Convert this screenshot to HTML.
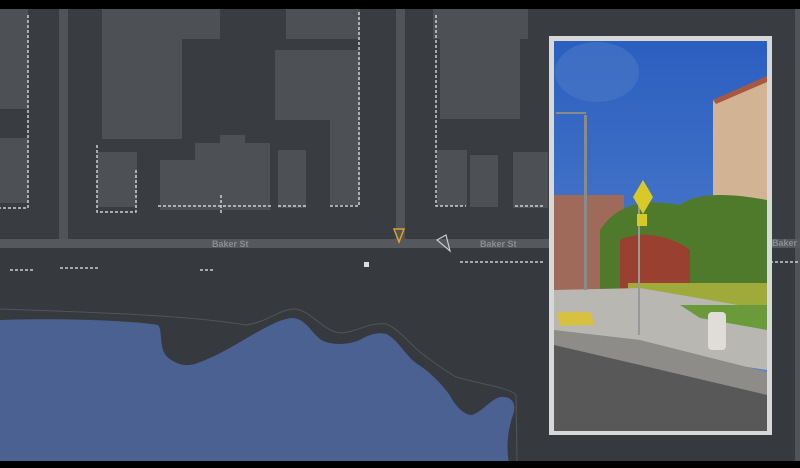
<!DOCTYPE html>
<html><head><style>
html,body{margin:0;padding:0;background:#000;}
svg{display:block;}
</style></head><body>
<svg width="800" height="468" viewBox="0 0 800 468" xmlns="http://www.w3.org/2000/svg">
<rect width="800" height="468" fill="#000"/>
<rect x="0" y="9" width="800" height="452" fill="#363a3e"/>
<rect x="0" y="9" width="800" height="230" fill="#393c40"/>
<rect x="59" y="9" width="9" height="230" fill="#505357"/>
<rect x="396" y="9" width="9" height="230" fill="#505357"/>
<rect x="795" y="9" width="5" height="452" fill="#505357"/>
<g fill="#4d5054">
<rect x="0" y="9" width="28" height="100"/>
<rect x="0" y="138" width="28" height="65"/>
<rect x="102" y="9" width="118" height="30"/>
<rect x="102" y="39" width="80" height="100"/>
<rect x="97" y="152" width="40" height="55"/>
<rect x="160" y="160" width="40" height="50"/>
<rect x="195" y="143" width="25" height="67"/>
<rect x="220" y="135" width="25" height="75"/>
<rect x="245" y="143" width="25" height="67"/>
<rect x="278" y="150" width="28" height="58"/>
<rect x="286" y="9" width="74" height="30"/>
<rect x="275" y="50" width="85" height="70"/>
<rect x="330" y="120" width="30" height="85"/>
<rect x="433" y="9" width="95" height="30"/>
<rect x="440" y="39" width="80" height="80"/>
<rect x="437" y="150" width="30" height="56"/>
<rect x="470" y="155" width="28" height="52"/>
<rect x="513" y="152" width="35" height="56"/>
</g>
<g stroke="#e8e8e8" stroke-width="1.5" stroke-dasharray="3 2" fill="none" opacity="0.85">
<path d="M28,15 V208 H0"/>
<path d="M97,145 V212 H136 V170"/>
<path d="M158,206 H273"/>
<path d="M278,206 H306"/>
<path d="M359,12 V206 H328"/>
<path d="M436,15 V206 H466"/>
<path d="M515,206 H545"/>
<path d="M221,195 V214"/>
<path d="M10,270 H35 M60,268 H100 M200,270 H215 M460,262 H545 M760,262 H800"/>
</g>
<rect x="364" y="262" width="5" height="5" fill="#ddd"/>
<rect x="0" y="239" width="800" height="9" fill="#55585c"/>
<text x="212" y="247" font-family="Liberation Sans,sans-serif" font-size="9" font-weight="bold" fill="#8a8d90">Baker St</text>
<text x="480" y="247" font-family="Liberation Sans,sans-serif" font-size="9" font-weight="bold" fill="#8a8d90">Baker St</text>
<text x="772" y="246" font-family="Liberation Sans,sans-serif" font-size="9" font-weight="bold" fill="#8a8d90">Baker St</text>
<polygon points="394,229 404,229 399,242" fill="none" stroke="#d9a420" stroke-width="1.5"/>
<polygon points="437,240 446,235 450,251" fill="none" stroke="#ccc" stroke-width="1.2"/>
<g transform="scale(1.053,1)">
<path d="M0,309 C80,312 180,315 233,325 C255,322 265,309 280,309 C295,310 305,330 323,333 C340,332 350,322 367,324 C380,330 390,345 400,353 C415,365 425,372 433,377 C460,385 485,388 490,395 L491,461" fill="none" stroke="#50545a" stroke-width="1"/>
<path d="M0,320 C50,318 120,320 150,325 C155,330 150,350 160,358 C170,366 178,366 185,364 C220,352 255,320 277,318 C290,318 295,332 305,340 C315,346 335,345 345,338 C352,334 360,332 367,334 C378,340 385,355 395,363 C410,373 420,385 427,395 C432,405 440,415 448,415 C458,412 465,400 475,397 C485,396 490,402 488,412 C484,425 480,440 483,461 L0,461 Z" fill="#4a6192"/>
</g>
<rect x="549" y="36" width="223" height="399" fill="#d8d8d8"/>
<defs>
<linearGradient id="sky" x1="0" y1="0" x2="0" y2="1">
<stop offset="0" stop-color="#2b5fc0"/><stop offset="1" stop-color="#5f8ad0"/>
</linearGradient>
</defs>
<rect x="554" y="41" width="213" height="390" fill="url(#sky)"/>
<ellipse cx="597" cy="72" rx="42" ry="30" fill="#4a78c4" opacity="0.6"/>
<polygon points="713,100 767,78 767,210 713,210" fill="#d2b394"/>
<polygon points="713,100 767,76 767,82 716,104" fill="#a85840"/>
<rect x="554" y="195" width="70" height="100" fill="#a06a5a"/>
<path d="M600,230 C620,200 650,200 680,205 C700,190 740,195 767,200 L767,290 L600,300 Z" fill="#4f7a2c"/>
<path d="M620,240 C640,230 670,235 690,250 L690,290 L620,295 Z" fill="#9a4030"/>
<rect x="628" y="283" width="139" height="25" fill="#9eaa3a"/>
<polygon points="554,290 640,288 767,310 767,370 700,360 640,345 554,335" fill="#b9b7b2"/>
<polygon points="680,305 767,305 767,330 700,318" fill="#6a9a3a"/>
<polygon points="554,330 640,340 767,372 767,395 640,365 554,345" fill="#8e8c88"/>
<polygon points="554,345 640,365 767,395 767,431 554,431" fill="#585858"/>
<polygon points="557,312 590,312 595,325 560,326" fill="#d8c040"/>
<rect x="584" y="115" width="3" height="175" fill="#8a8a8a"/>
<rect x="556" y="112" width="30" height="2" fill="#8a8a8a"/>
<rect x="638" y="200" width="2" height="135" fill="#999"/>
<polygon points="643,180 653,197 643,214 633,197" fill="#d8c828"/>
<rect x="637" y="214" width="10" height="12" fill="#d8c828"/>
<rect x="708" y="312" width="18" height="38" rx="4" fill="#e0ddd8"/>
</svg>
</body></html>
